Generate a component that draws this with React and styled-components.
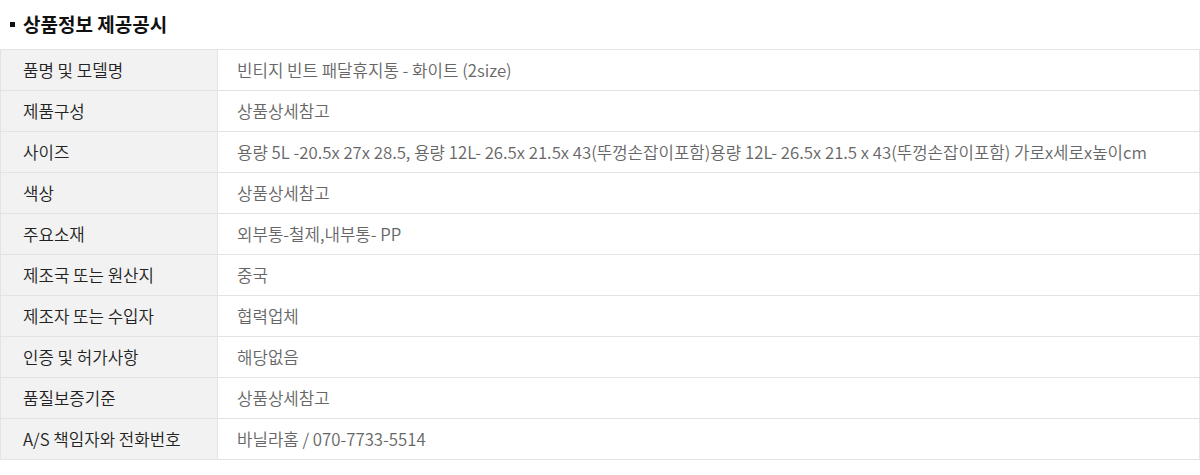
import React from "react";
import styled, { createGlobalStyle } from "styled-components";

const Global = createGlobalStyle`
  html, body { margin: 0; padding: 0; background: #fff; }
  body { font-family: "Noto Sans CJK KR", "Noto Sans", sans-serif; }
`;

const Wrap = styled.div`
  width: 1200px;
`;

const Title = styled.h3`
  margin: 0;
  height: 49px;
  display: flex;
  align-items: center;
  gap: 8px;
  padding: 0 0 2px 10px;
  box-sizing: border-box;
  font-size: 19px;
  font-weight: 700;
  color: #111;
  &::before {
    content: "";
    width: 5px;
    height: 5px;
    margin-top: 2px;
    background: #111;
  }
`;

const Table = styled.div`
  border-top: 1px solid #e3e3e3;
  border-left: 1px solid #e3e3e3;
  border-right: 1px solid #e3e3e3;
  width: 1200px;
  box-sizing: border-box;
`;

const Row = styled.div`
  display: grid;
  grid-template-columns: 217px 1fr;
  height: 41px;
  box-sizing: border-box;
  border-bottom: 1px solid #e3e3e3;
`;

const Label = styled.div`
  display: flex;
  align-items: center;
  padding: 0 0 1px 22px;
  font-size: 16.8px;
  font-weight: 350;
  color: #222;
  background: #f2f2f2;
  border-right: 1px solid #e3e3e3;
  white-space: nowrap;
`;

const Value = styled.div`
  display: flex;
  align-items: center;
  padding: 0 0 1px 19px;
  font-size: 16.8px;
  font-weight: 350;
  color: #666;
  white-space: nowrap;
`;

const rows = [
  ["품명 및 모델명", "빈티지 빈트 패달휴지통 - 화이트 (2size)"],
  ["제품구성", "상품상세참고"],
  ["사이즈", "용량 5L -20.5x 27x 28.5, 용량 12L- 26.5x 21.5x 43(뚜껑손잡이포함)용량 12L- 26.5x 21.5 x 43(뚜껑손잡이포함) 가로x세로x높이cm"],
  ["색상", "상품상세참고"],
  ["주요소재", "외부통-철제,내부통- PP"],
  ["제조국 또는 원산지", "중국"],
  ["제조자 또는 수입자", "협력업체"],
  ["인증 및 허가사항", "해당없음"],
  ["품질보증기준", "상품상세참고"],
  ["A/S 책임자와 전화번호", "바닐라홈 / 070-7733-5514"],
];

export default function App() {
  return (
    <Wrap>
      <Global />
      <Title>상품정보 제공공시</Title>
      <Table>
        {rows.map(([k, v]) => (
          <Row key={k}>
            <Label>{k}</Label>
            <Value>{v}</Value>
          </Row>
        ))}
      </Table>
    </Wrap>
  );
}
